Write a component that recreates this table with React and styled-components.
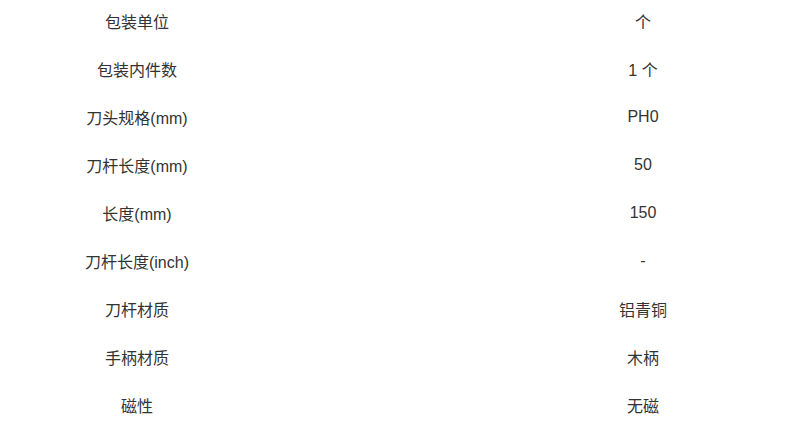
import React from "react";
import styled, { createGlobalStyle } from "styled-components";

const Global = createGlobalStyle`
  html, body { margin: 0; padding: 0; background: #fff; }
  body { font-family: "Liberation Sans", "Noto Sans CJK SC", sans-serif; }
`;

const Table = styled.div`
  width: 800px;
  display: grid;
  grid-template-columns: 274px 1fr;
  grid-auto-rows: 42px;
  row-gap: 6px;
  color: #333;
  font-size: 16px;
`;

const Cell = styled.div`
  display: flex;
  align-items: center;
  justify-content: center;
  white-space: nowrap;
  padding-left: ${(p) => (p.$value ? "212px" : "0")};
`;

const rows = [
  ["包装单位", "个"],
  ["包装内件数", "1 个"],
  ["刀头规格(mm)", "PH0"],
  ["刀杆长度(mm)", "50"],
  ["长度(mm)", "150"],
  ["刀杆长度(inch)", "-"],
  ["刀杆材质", "铝青铜"],
  ["手柄材质", "木柄"],
  ["磁性", "无磁"],
];

export default function App() {
  return (
    <>
      <Global />
      <Table>
        {rows.map(([k, v]) => (
          <React.Fragment key={k}>
            <Cell>{k}</Cell>
            <Cell $value>{v}</Cell>
          </React.Fragment>
        ))}
      </Table>
    </>
  );
}
